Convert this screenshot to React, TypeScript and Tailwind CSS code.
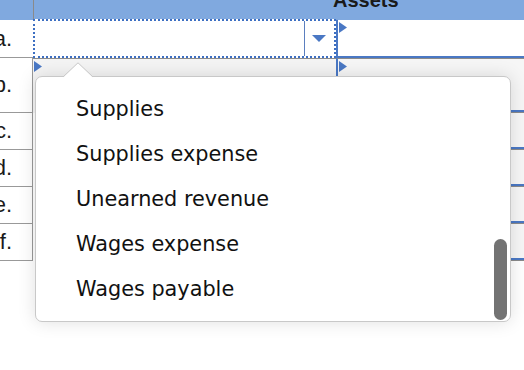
import React from "react";

const Marker = () => (
  <svg width="8" height="11" viewBox="0 0 8 11" className="absolute left-[1px] top-[2px]">
    <polygon points="0,0 8,5.5 0,11" fill="#4a78c4" />
  </svg>
);

const labelRows = [
  { l: "c.", h: "h-[37px]" },
  { l: "d.", h: "h-[37px]" },
  { l: "e.", h: "h-[37px]" },
  { l: "f.", h: "h-[37px]" },
];

const items = ["Supplies", "Supplies expense", "Unearned revenue", "Wages expense", "Wages payable"];

export default function App() {
  return (
    <div className="relative w-[524px] h-[370px] overflow-hidden bg-white font-['Liberation_Sans',Arial,sans-serif] text-[#1a1a1a]">
      {/* header */}
      <div className="flex h-[20px] bg-[#80a9df]">
        <div className="w-[34px] shrink-0 border-r border-[#8a8a8a]" />
        <div className="flex-1 overflow-hidden">
          <div className="ml-[299px] -mt-[10px] text-[20px] font-bold leading-[20px] text-[#1a1a1a]">Assets</div>
        </div>
      </div>

      {/* row a */}
      <div className="flex h-[38px]">
        <div className="flex w-[33px] shrink-0 items-center justify-end overflow-hidden border-b border-[#999] pr-[21px] text-[22px] leading-none">a.</div>
        <div className="-mt-[1px] flex h-[39px] w-[303px] shrink-0 border-2 border-dotted border-[#3d6fc2] bg-white">
          <div className="flex-1" />
          <div className="flex w-[30px] items-center justify-center border-l border-[#5b7fbf]">
            <svg width="14" height="7" viewBox="0 0 14 7" className="-ml-[2px]">
              <polygon points="0,0 14,0 7,7" fill="#4a78c4" />
            </svg>
          </div>
        </div>
        <div className="relative flex-1 border-l-2 border-[#4a78c4] shadow-[inset_0_-2px_0_#4a78c4]">
          <Marker />
        </div>
      </div>

      {/* row b */}
      <div className="flex h-[55px]">
        <div className="flex w-[33px] shrink-0 items-center justify-end overflow-hidden border-b border-r border-[#999] pr-[20px] text-[22px] leading-none">b.</div>
        <div className="relative w-[303px] shrink-0 border-t border-[#8a8a8a] bg-[#f4f4f4]">
          <Marker />
        </div>
        <div className="relative flex-1 border-l-2 border-t border-[#4a78c4] border-t-[#8a8a8a] bg-[#f6f6f6] shadow-[inset_0_-1px_0_#8a8a8a,inset_0_-3px_0_#4a78c4]">
          <Marker />
        </div>
      </div>

      {labelRows.map((r) => (
        <div key={r.l} className={`flex ${r.h}`}>
          <div className="flex w-[33px] shrink-0 items-center justify-end overflow-hidden border-b border-r border-[#999] pr-[20px] text-[22px] leading-none">{r.l}</div>
          <div className="w-[303px] shrink-0" />
          <div className="flex-1 bg-[#f6f6f6] shadow-[inset_0_-1px_0_#8a8a8a,inset_0_-3px_0_#4a78c4]" />
        </div>
      ))}

      {/* popup */}
      <div className="absolute left-[35px] top-[76px] h-[246px] w-[476px] rounded-[7px] border border-[#c8c8c8] bg-white shadow-[0_0_18px_rgba(0,0,0,0.13)]">
        <svg width="30" height="16" viewBox="0 0 30 16" className="absolute left-[27px] -top-[15px]">
          <polygon points="0,15.5 15,1 30,15.5" fill="white" />
          <polyline points="0,15 15,0.8 30,15" fill="none" stroke="#c8c8c8" strokeWidth="1" />
        </svg>
        <ul className="pl-[40px] pt-[10px] font-['DejaVu_Sans',Verdana,sans-serif] text-[20.8px] leading-[45px] text-[#111]">
          {items.map((it) => (
            <li key={it}>{it}</li>
          ))}
        </ul>
        <div className="absolute right-[3px] bottom-[1px] h-[81px] w-[13px] rounded-full bg-[#737373]" />
      </div>
    </div>
  );
}
